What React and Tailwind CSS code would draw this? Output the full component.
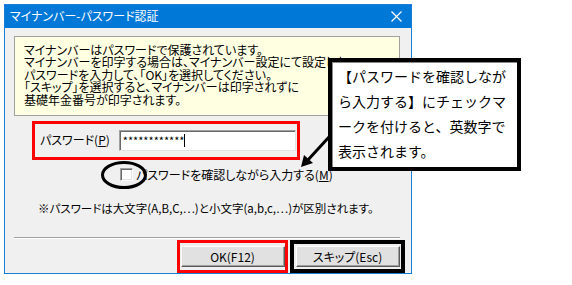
import React from 'react';

const jp = "font-['Noto_Sans_CJK_JP',sans-serif]";
const palt = "[font-feature-settings:'palt']";

const Btn = ({ children }) => (
  <div className="w-[104px] h-[21px] bg-[#e1e1e1] border border-t-white border-l-white border-b-[#5a5a5a] border-r-[#5a5a5a] shadow-[inset_-1px_-1px_0_#a0a0a0] flex items-center justify-center text-[12px] text-black">
    {children}
  </div>
);

export default function App() {
  return (
    <div className={`relative w-[572px] h-[285px] bg-white pl-[4px] pt-[4px] ${jp}`}>
      {/* Dialog window */}
      <div className={`w-[408px] h-[270px] border border-[#1a7fd4] bg-[#f0f0f0] flex flex-col ${palt}`}>
        <div className="h-[25px] bg-[#0078d7] flex items-center justify-between pl-[5px] pr-[9px] text-white text-[12px]">
          <span>マイナンバー-パスワード認証</span>
          <svg width="11" height="11" viewBox="0 0 11 11">
            <path d="M0.5 0.5 L10.5 10.5 M10.5 0.5 L0.5 10.5" stroke="white" strokeWidth="1.2" />
          </svg>
        </div>

        <div className="flex flex-col px-[9px]">
          {/* Info box */}
          <div className="mt-[8px] w-[386px] h-[80px] bg-[#ffffe1] border border-[#a0a0a0] pl-[9px] pt-[7px] text-[12px] leading-[12.5px] text-black whitespace-nowrap overflow-hidden">
            <div>マイナンバーはパスワードで保護されています。</div>
            <div>マイナンバーを印字する場合は、マイナンバー設定にて設定した</div>
            <div>パスワードを入力して、「OK」を選択してください。</div>
            <div>「スキップ」を選択すると、マイナンバーは印字されずに</div>
            <div>基礎年金番号が印字されます。</div>
          </div>

          {/* Password row (highlighted) */}
          <div className="mt-[5px] ml-[18px] w-[268px] h-[39px] border-[3px] border-[#ff0000] flex items-center pl-[5px] gap-[9px]">
            <span className="text-[12px] text-black whitespace-nowrap">
              パスワード(<span className="underline">P</span>)
            </span>
            <div className="w-[177px] h-[21px] bg-white border border-t-[#a0a0a0] border-l-[#a0a0a0] border-b-[#e3e3e3] border-r-[#e3e3e3] shadow-[inset_1px_1px_0_#696969] flex items-center pl-[3px] text-[11px] leading-none text-black">
              ************<span className="w-px h-[13px] bg-black" />
            </div>
          </div>

          {/* Checkbox row */}
          <div className="mt-[6px] ml-[106px] flex items-center gap-[3px] text-[12px] text-black whitespace-nowrap">
            <span className="w-[13px] h-[13px] bg-white border border-t-[#a0a0a0] border-l-[#a0a0a0] border-b-white border-r-white shadow-[inset_1px_1px_0_#696969,inset_-1px_-1px_0_#e3e3e3]" />
            <span>
              パスワードを確認しながら入力する(<span className="underline">M</span>)
            </span>
          </div>

          {/* Note */}
          <div className="mt-[16px] ml-[24px] text-[11.5px] text-black whitespace-nowrap">
            ※パスワードは大文字(A,B,C,…)と小文字(a,b,c,…)が区別されます。
          </div>

          {/* Separator */}
          <div className="mt-[20px] w-[386px] h-[2px] border-t border-t-[#a0a0a0] border-b border-b-white" />

          {/* Buttons */}
          <div className="mt-[1px] flex justify-end gap-[2px] -mr-[3px]">
            <div className="w-[111px] h-[33px] border-[3px] border-[#ff0000] flex items-center justify-center">
              <Btn>OK(F12)</Btn>
            </div>
            <div className="w-[115px] h-[33px] border-[4px] border-black flex items-center justify-center">
              <Btn>スキップ(Esc)</Btn>
            </div>
          </div>
        </div>
      </div>

      {/* Callout */}
      <div className="absolute left-[328px] top-[58px] w-[193px] h-[113px] bg-white border-[4px] border-black shadow-[inset_1px_1px_0_#888] pl-[6px] pt-[2px] text-[14px] leading-[25px] text-black whitespace-nowrap">
        【パスワードを確認しなが<br />
        ら入力する】にチェックマ<br />
        ークを付けると、英数字で<br />
        表示されます。
      </div>

      {/* Arrow */}
      <svg className="absolute left-[296px] top-[134px]" width="36" height="36" viewBox="0 0 36 36">
        <line x1="33" y1="3" x2="11" y2="27" stroke="black" strokeWidth="3" />
        <polygon points="5,33 8,21 17,29" fill="black" />
      </svg>

      {/* Ellipse around checkbox */}
      <svg className="absolute left-[100px] top-[160px]" width="48" height="30" viewBox="0 0 48 30">
        <ellipse cx="24" cy="15" rx="21.5" ry="12.5" fill="none" stroke="black" strokeWidth="3" />
      </svg>
    </div>
  );
}
